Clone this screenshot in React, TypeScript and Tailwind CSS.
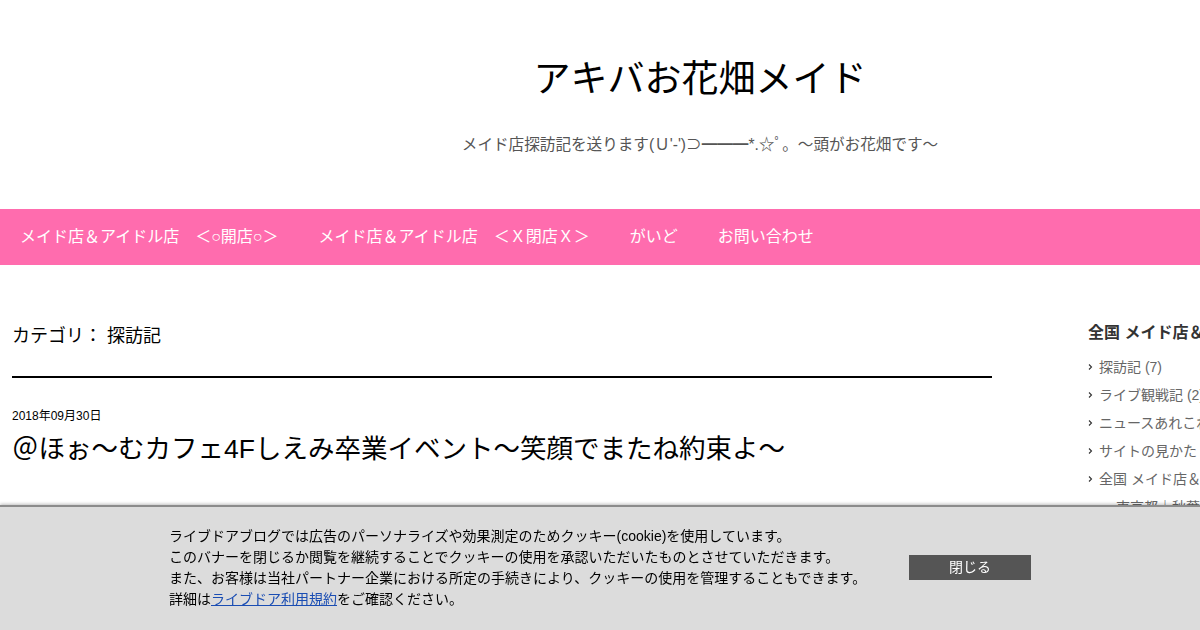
import React from 'react';

const font = "font-['Liberation_Sans','Noto_Sans_CJK_JP',sans-serif]";

const navItems = [
  'メイド店＆アイドル店　＜○開店○＞',
  'メイド店＆アイドル店　＜Ｘ閉店Ｘ＞',
  'がいど',
  'お問い合わせ',
];

const categories = [
  '探訪記 (7)',
  'ライブ観戦記 (2)',
  'ニュースあれこれ (3)',
  'サイトの見かた (1)',
  '全国 メイド店＆アイドル店',
];

const Chevron = () => (
  <svg width="5" height="8" viewBox="0 0 5 8" className="mr-[6px] shrink-0">
    <path d="M1 1.5 L3.5 4 L1 6.5" fill="none" stroke="#333" strokeWidth="1.1" />
  </svg>
);

export default function App() {
  return (
    <div className={`w-[1200px] h-[630px] overflow-hidden bg-white relative ${font}`}>
      <div className="w-[1400px]">
        {/* header */}
        <header className="h-[209px] flex flex-col items-center pt-[56px]">
          <h1 className="text-[37px] leading-[48px] text-black">アキバお花畑メイド</h1>
          <p className="mt-[31px] text-[15.6px] leading-[20px] text-[#555]">
            メイド店探訪記を送ります(Ｕ'-')⊃━━━*.☆ﾟ。～頭がお花畑です～
          </p>
        </header>

        {/* global nav */}
        <nav className="h-[56px] bg-[#ff6cae] flex items-center">
          {navItems.map((item) => (
            <a key={item} className="px-[20px] text-[16px] text-white whitespace-nowrap">
              {item}
            </a>
          ))}
        </nav>

        <div className="flex pt-[52px]">
          {/* main column */}
          <main className="ml-[12px] w-[980px]">
            <h2 className="text-[18px] leading-[28px] text-black pt-[5px] pb-[26px] border-b-2 border-black">
              カテゴリ： 探訪記
            </h2>
            <p className="mt-[30px] text-[12px] leading-[16px] text-black">2018年09月30日</p>
            <h3 className="mt-[9px] text-[26.5px] leading-[32px] text-black">
              ＠ほぉ～むカフェ4Fしえみ卒業イベント～笑顔でまたね約束よ～
            </h3>
          </main>

          {/* side bar */}
          <aside className="ml-[96px] w-[300px] pt-[4px]">
            <h4 className="text-[16px] leading-[24px] font-bold text-[#333] whitespace-nowrap">
              全国 メイド店＆アイドル店 カテゴリ
            </h4>
            <ul className="mt-[8px]">
              {categories.map((c) => (
                <li key={c} className="flex items-center h-[28px] text-[14px] text-[#666] whitespace-nowrap">
                  <Chevron />
                  {c}
                </li>
              ))}
              <li className="flex items-center h-[28px] pl-[14px] text-[14px] text-[#666] whitespace-nowrap">
                ・東京都｜秋葉原
              </li>
            </ul>
          </aside>
        </div>
      </div>

      {/* cookie banner */}
      <div className="fixed left-0 bottom-0 w-[1200px] h-[125px] bg-[#dcdcdc] border-t-2 border-[#8c8c8c] shadow-[0_-1px_3px_rgba(0,0,0,0.25)]">
        <div className="w-[862px] mx-auto pt-[19px] flex items-start justify-between">
          <div className="text-[14px] leading-[21px] text-black whitespace-nowrap">
            <p>ライブドアブログでは広告のパーソナライズや効果測定のためクッキー(cookie)を使用しています。</p>
            <p>このバナーを閉じるか閲覧を継続することでクッキーの使用を承認いただいたものとさせていただきます。</p>
            <p>また、お客様は当社パートナー企業における所定の手続きにより、クッキーの使用を管理することもできます。</p>
            <p>
              詳細は<a className="text-[#1a4db3] underline">ライブドア利用規約</a>をご確認ください。
            </p>
          </div>
          <button className="mt-[29px] w-[122px] h-[25px] bg-[#555] text-white text-[14px] leading-[25px]">
            閉じる
          </button>
        </div>
      </div>
    </div>
  );
}
